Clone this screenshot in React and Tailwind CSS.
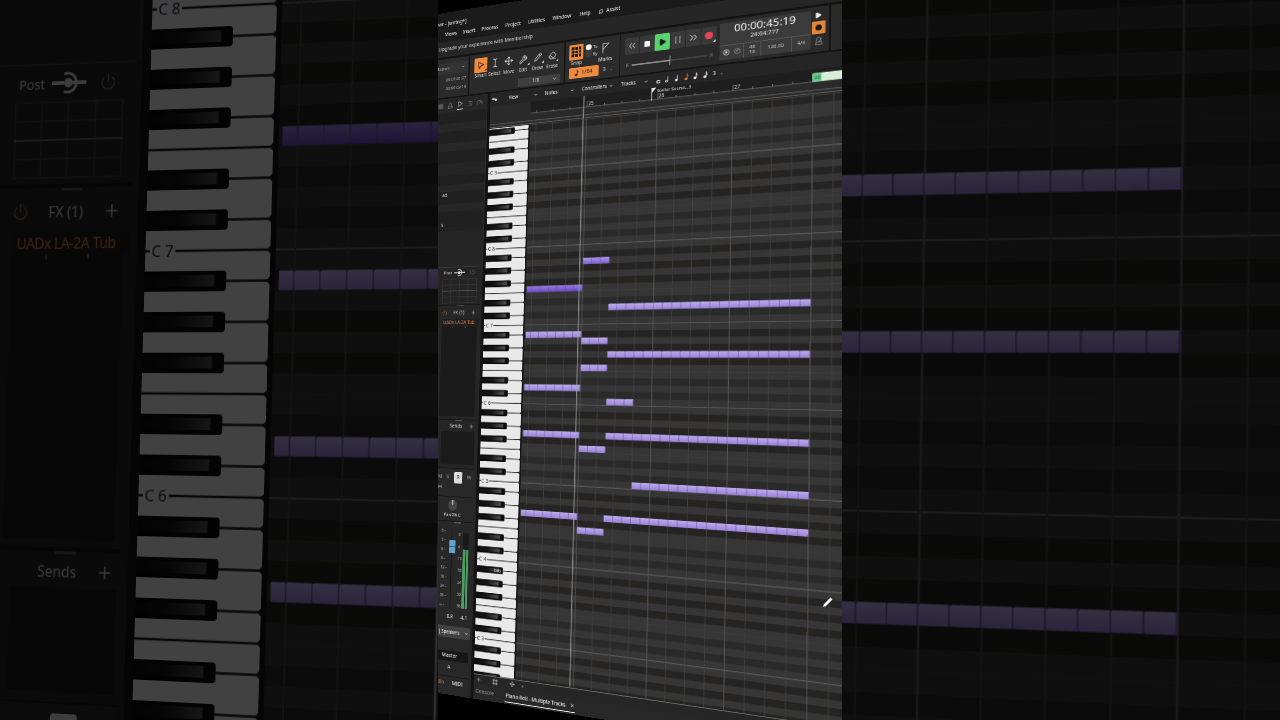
import React from "react";
import {
  ChevronDown,
  ChevronsLeft,
  ChevronsRight,
  Eraser,
  Grid3x3,
  List,
  Move,
  Pencil,
  Play,
  Plus,
  Power,
  Search,
  Wrench,
  X,
  TextCursor,
  Gauge,
} from "lucide-react";

const ROW = 21;
const CELL = 28.625;
const BEAT = 57.25;
const BLACK_ROWS = [1, 3, 5, 8, 10];
const WHITE_EDGES = [1.5, 3.5, 5.5, 7, 8.5, 10.5, 12];
// y of the C 9 line inside the roll
const C9 = 150;
const ROLL_HEIGHT = 1774;
const GRID_WIDTH = 1064;
// x of bar 25, measured from the right side of the keys
const BAR_25 = 193;

const MENU = [
  { label: "Views", width: "w-[68px]" },
  { label: "Insert", width: "w-[68px]" },
  { label: "Process", width: "w-[88px]" },
  { label: "Project", width: "w-[80px]" },
  { label: "Utilities", width: "w-[86px]" },
  { label: "Window", width: "w-[90px]" },
  { label: "Help", width: "w-[68px]" },
];

const EDITOR_MENU = [
  { label: "View", width: "w-[128px]" },
  { label: "Notes", width: "w-[126px]" },
  { label: "Controllers", width: "w-[130px]" },
  { label: "Tracks", width: "w-[112px]" },
];

// row is counted down from C 9, from and to are eighths counted from bar 25
const NOTES = [
  { row: 18, from: -6.6, to: 0, tone: "deep" },
  { row: 25, from: -6.6, to: 0 },
  { row: 33, from: -6.6, to: 0 },
  { row: 40, from: -6.6, to: 0 },
  { row: 52, from: -6.6, to: 0 },
  { row: 14, from: 0, to: 3, tone: "mid" },
  { row: 26, from: 0, to: 3 },
  { row: 30, from: 0, to: 3 },
  { row: 42, from: 0, to: 3 },
  { row: 54, from: 0, to: 3 },
  { row: 35, from: 3, to: 6 },
  { row: 21, from: 3, to: 24 },
  { row: 28, from: 3, to: 24 },
  { row: 40, from: 3, to: 24 },
  { row: 47, from: 6, to: 24 },
  { row: 52, from: 3, to: 24 },
];

function splitNote(note) {
  const cells = [];
  let start = note.from;
  while (start < note.to) {
    const stop = Math.floor(start) + 1;
    cells.push([BAR_25 + start * CELL, BAR_25 + stop * CELL]);
    start = stop;
  }
  return cells;
}

function beatLines() {
  const beats = [];
  for (let i = -3; BAR_25 + i * BEAT < GRID_WIDTH; i++) {
    beats.push({ x: BAR_25 + i * BEAT, bar: i % 4 === 0 });
  }
  return beats;
}

function TopBars() {
  return (
    <>
      <div className="flex h-14 items-end bg-[#1b1b1b] pb-1 pl-5 text-[17px] text-[#f0f0f0]">
        Sonar - [smtng*]
      </div>
      <div className="flex h-[46px] items-center bg-[#1b1b1b] pl-[61px] text-[17px] text-[#f4f4f4]">
        {MENU.map((item) => (
          <span key={item.label} className={`${item.width} text-center`}>
            {item.label}
          </span>
        ))}
        <Search size={17} className="ml-3 mr-2 -scale-x-100" />
        <span>Assist</span>
      </div>
      <div className="flex h-[54px] items-center bg-[#262626] pl-[50px] text-[17px] text-[#d6d6d6]">
        Upgrade your experience with Membership
      </div>
    </>
  );
}

function Tool({ label, active, corner, children }) {
  return (
    <div className="flex w-[51px] flex-col items-center">
      <div
        className={`relative flex h-[50px] w-[48px] items-center justify-center rounded-[3px] ${
          active ? "bg-[#f28a3c] text-[#1c1c1c]" : "text-[#dcdcdc]"
        }`}
      >
        {children}
        {corner && (
          <span className="absolute bottom-1 right-0.5 h-0 w-0 border-b-[8px] border-l-[8px] border-b-current border-l-transparent" />
        )}
      </div>
      <span className="text-[16px] leading-[22px]">{label}</span>
    </div>
  );
}

function ToolsPanel() {
  return (
    <div className="flex w-[338px] bg-[#2b2b2b] pl-4 pt-3 text-[#dcdcdc]">
      <div>
        <div className="flex">
          <Tool label="Smart" active corner>
            <svg width="28" height="30" viewBox="0 0 28 30" fill="none" stroke="currentColor" strokeWidth="2.5">
              <path d="M5 4 L24 14 L14 18 L8 26 Z" />
            </svg>
          </Tool>
          <Tool label="Select">
            <TextCursor size={32} strokeWidth={1.8} />
          </Tool>
          <Tool label="Move">
            <Move size={31} strokeWidth={2} />
          </Tool>
          <Tool label="Edit" corner>
            <Wrench size={30} strokeWidth={1.8} />
          </Tool>
          <Tool label="Draw" corner>
            <Pencil size={28} strokeWidth={1.8} />
          </Tool>
          <Tool label="Erase" corner>
            <Eraser size={29} strokeWidth={1.8} />
          </Tool>
        </div>
        <div className="ml-[162px] mt-4 flex h-[27px] w-[146px] items-center bg-[#404040] pl-[50px] pr-2 text-[17px]">
          <span className="flex-1">1/8</span>
          <ChevronDown size={18} />
        </div>
      </div>
    </div>
  );
}

function SnapPanel() {
  return (
    <div className="flex w-[180px] flex-col bg-[#2b2b2b] pl-3 pt-3 text-[#dcdcdc]">
      <div className="flex">
        <Tool label="Snap" active>
          <div className="grid grid-cols-3 gap-[2.5px]">
            {[...Array(9)].map((_, i) => (
              <span key={i} className="h-[9.5px] w-[9.5px] bg-[#1c1c1c]" />
            ))}
          </div>
        </Tool>
        <div className="flex pl-1.5 pt-1.5">
          <div className="h-[42px] w-[18px] rounded-full bg-[#3c3c3c]">
            <div className="h-[18px] w-[18px] rounded-full bg-white" />
          </div>
          <div className="flex flex-col pl-1.5 text-[13px] leading-[22px]">
            <span>To</span>
            <span>By</span>
          </div>
        </div>
        <Tool label="Marks">
          <svg width="28" height="36" viewBox="0 0 28 36" fill="none" stroke="currentColor" strokeWidth="2.2">
            <path d="M5 35 V4 H25 L5 23" />
          </svg>
        </Tool>
      </div>
      <div className="mt-1 flex items-center">
        <div className="flex h-[34px] w-[102px] items-center justify-center gap-2 rounded-sm bg-[#f28a3c] text-[18px] text-[#222]">
          <NoteGlyph kind="eighth" />
          <span>1/64</span>
        </div>
        <span className="pl-3 text-[17px]">3</span>
        <span className="pl-4 text-[17px]">.</span>
      </div>
    </div>
  );
}

function NoteGlyph({ kind }) {
  if (kind === "whole") {
    return (
      <svg width="14" height="24" viewBox="0 0 14 24" fill="none" stroke="currentColor" strokeWidth="2.5">
        <ellipse cx="7" cy="18" rx="5.5" ry="4" />
      </svg>
    );
  }
  return (
    <svg width="14" height="24" viewBox="0 0 14 24" fill="none" stroke="currentColor" strokeWidth="2">
      <ellipse cx="4.5" cy="19" rx="3.5" ry="3" fill={kind === "half" ? "none" : "currentColor"} />
      <path d="M8 19 V4" />
      {(kind === "eighth" || kind === "sixteenth") && <path d="M8 4 Q9 8 13 11" />}
      {kind === "sixteenth" && <path d="M8 9 Q9 12 13 15" />}
    </svg>
  );
}

function TransportButton({ className = "", children }) {
  return (
    <div className={`flex h-[52px] w-[46px] items-center justify-center rounded-sm ${className || "bg-[#393939]"}`}>
      {children}
    </div>
  );
}

function TransportPanel() {
  return (
    <div className="flex w-[622px] bg-[#292929] pl-3.5 text-[#dcdcdc]">
      <div className="flex w-[296px] flex-col pt-4">
        <div className="flex gap-[2px]">
          <TransportButton>
            <ChevronsLeft size={36} strokeWidth={1.5} />
          </TransportButton>
          <TransportButton>
            <span className="h-[19px] w-[19px] bg-white" />
          </TransportButton>
          <TransportButton className="bg-[#58d26d] text-[#111]">
            <Play size={24} fill="currentColor" />
          </TransportButton>
          <TransportButton>
            <div className="h-[24px] w-[15px] border-x-[2.5px] border-[#bdbdbd]" />
          </TransportButton>
          <TransportButton>
            <ChevronsRight size={36} strokeWidth={1.5} />
          </TransportButton>
          <TransportButton className="relative bg-[#393939]">
            <span className="h-[24px] w-[24px] rounded-full bg-[#e24558]" />
            <span className="absolute bottom-1 right-0.5 h-0 w-0 border-b-[9px] border-l-[9px] border-b-white border-l-transparent" />
          </TransportButton>
        </div>
        <div className="mt-5 flex items-center gap-2 pl-1 pr-5">
          <span className="text-[16px] leading-none text-[#8a8a8a]">K</span>
          <div className="flex flex-1 items-center">
            <div className="h-[4px] w-[120px] bg-[#8a8a8a]" />
            <div className="h-[30px] w-[4px] bg-[#b0b0b0]" />
            <div className="h-[4px] flex-1 bg-[#444]" />
          </div>
          <span className="-scale-x-100 text-[16px] leading-none text-[#8a8a8a]">K</span>
        </div>
      </div>
      <div className="mt-2.5 flex h-[112px] w-[261px] flex-col rounded bg-[#3b3b3b] text-[#ececec]">
        <div className="flex h-[67px] flex-col items-center">
          <span className="text-[33px] leading-[36px]">00:00:45:19</span>
          <span className="text-[18px] leading-[22px]">24:04:777</span>
        </div>
        <div className="flex flex-1 border-t-2 border-[#555] text-[15px] text-[#c8c8c8]">
          <div className="flex w-[70px] items-center justify-center gap-3">
            <svg width="20" height="20" viewBox="0 0 20 20">
              <circle cx="10" cy="10" r="8" fill="none" stroke="#ccc" strokeWidth="2" />
              <circle cx="10" cy="10" r="3.5" fill="#ddd" />
            </svg>
            <svg width="20" height="20" viewBox="0 0 20 20" fill="none" stroke="#888" strokeWidth="2">
              <circle cx="10" cy="10" r="8" />
              <path d="M6 8 H14 M7 13 L15 4" />
            </svg>
          </div>
          <div className="flex w-[48px] flex-col items-center justify-center border-l-2 border-[#555] leading-[16px]">
            <span>48</span>
            <span>16</span>
          </div>
          <div className="flex w-[88px] items-center justify-center border-l-2 border-[#555]">126.00</div>
          <div className="flex flex-1 items-center justify-center border-l-2 border-[#555]">4/4</div>
        </div>
      </div>
      <div className="flex flex-1 flex-col items-center gap-[7px] pr-2 pt-[15px]">
        <Play size={20} fill="#eee" stroke="#eee" />
        <div className="flex h-[38px] w-[38px] items-center justify-center rounded-[3px] bg-[#e2863e]">
          <span className="h-[18px] w-[18px] rounded-full bg-[#1c1414]" />
        </div>
        <svg width="24" height="28" viewBox="0 0 24 28" fill="none" stroke="#8b8b8b" strokeWidth="2">
          <path d="M8 3 H15 L21 24 H3 Z M6 17 H18 M11 17 L20 5" />
        </svg>
      </div>
    </div>
  );
}

function Toolbar() {
  return (
    <div className="flex h-[144px] gap-1 bg-[#141414] py-1.5">
      <div className="flex w-[166px] flex-col bg-[#2b2b2b] pl-[48px] pt-4 text-[15px] text-[#b4b4b4]">
        <div className="flex h-[36px] items-center bg-[#333] pr-3">
          <span className="flex-1">Export</span>
          <ChevronDown size={16} />
        </div>
        <span className="mt-3 self-end pr-2 text-[14px]">00:01:21:27</span>
        <span className="mt-2 self-end pr-2 text-[14px]">00:00:02:19</span>
      </div>
      <ToolsPanel />
      <SnapPanel />
      <TransportPanel />
      <div className="flex-1 bg-[#2b2b2b] pl-[34px] pt-[90px] text-[15px] text-[#ccc]">Performance</div>
    </div>
  );
}

function StripPower({ color }) {
  return <Power size={19} strokeWidth={1.8} color={color} />;
}

function Handle() {
  return <div className="mx-auto h-[3px] w-6 bg-[#555]" />;
}

function MeterScale({ values }) {
  return (
    <div className="flex h-full flex-col justify-between whitespace-nowrap text-[12px] leading-none text-[#c0c0c0]">
      {values.map((value, i) => (
        <span key={i}>{value}</span>
      ))}
    </div>
  );
}

function Inspector() {
  return (
    <div className="flex w-[240px] shrink-0 flex-col bg-[#262626] text-[#d0d0d0]">
      <div className="flex h-[50px] items-center gap-[16px] pl-[54px] text-[#8a8a8a]">
        <Grid3x3 size={20} />
        <svg width="22" height="22" viewBox="0 0 24 24" fill="none" stroke="currentColor" strokeWidth="2">
          <path d="M8 3 H16 L21 21 H3 Z M6 15 H18" />
        </svg>
        <div className="flex h-[34px] items-center border-b-[3px] border-white text-[#ccc]">
          <Play size={21} />
        </div>
        <List size={20} />
        <Gauge size={22} />
      </div>
      <div className="flex h-[524px] flex-col border-r-4 border-[#303030] bg-[#202020] text-[15px]">
        <div className="mt-[38px] h-[26px] bg-[#272727]" />
        <div className="mt-[42px] h-[26px] bg-[#272727]" />
        <div className="mt-[42px] h-[40px] bg-[#252525]" />
        <div className="mt-[34px] h-[22px] bg-[#272727]" />
        <span className="pl-[80px] text-[17px]">ad</span>
        <div className="mt-[16px] h-[26px] bg-[#272727]" />
        <span className="mt-[34px] pl-[80px] text-[17px]">s</span>
        <div className="mt-2 flex-1 bg-[#262626]" />
      </div>
      <div className="mr-2 flex h-[128px] flex-col border-t-2 border-[#3a3a3a] bg-[#242424] pl-[97px]">
        <div className="flex h-[38px] items-center gap-2 text-[15px]">
          <span>Post</span>
          <svg width="40" height="26" viewBox="0 0 40 26" fill="none" stroke="#d8d8d8" strokeWidth="4">
            <path d="M0 13 H14 M20 13 H40" />
            <path d="M14 4 A10 10 0 1 1 14 22" strokeWidth="3" />
            <circle cx="19" cy="13" r="5" fill="#d8d8d8" stroke="none" />
          </svg>
          <span className="flex-1 pl-2">
            <StripPower color="#777" />
          </span>
        </div>
        <svg width="127" height="82" viewBox="0 0 127 82" fill="none" stroke="#393939" strokeWidth="2" className="-ml-1">
          <rect x="1" y="1" width="125" height="80" />
          <path d="M32 0 V82 M63 0 V82 M95 0 V82 M0 21 H127 M0 61 H127" />
          <path d="M0 41 H127" stroke="#606060" />
        </svg>
      </div>
      <div className="mr-2 flex h-[380px] flex-col border-t-4 border-[#171717] bg-[#262626] pl-[94px]">
        <Handle />
        <div className="flex h-[43px] items-center justify-between pr-3 text-[16px]">
          <StripPower color="#a9673b" />
          <span>FX (1)</span>
          <Plus size={20} />
        </div>
        <div className="h-[24px] whitespace-nowrap bg-[#1f1f1f] pl-1.5 text-[16px] leading-[24px] tracking-tight text-[#dd7b42]">
          UADx LA-2A Tub
        </div>
        <div className="mr-2 flex h-[298px] justify-around bg-[#1b1b1b] px-4">
          <span className="h-[5px] w-[2px] bg-[#666]" />
          <span className="h-[5px] w-[2px] bg-[#666]" />
        </div>
      </div>
      <div className="mr-2 flex h-[160px] flex-col border-t-4 border-[#171717] bg-[#262626] pl-[104px]">
        <Handle />
        <div className="flex h-[35px] items-center justify-between pl-8 pr-2 text-[16px]">
          <span>Sends</span>
          <Plus size={20} />
        </div>
        <div className="mr-1 h-[108px] bg-[#1b1b1b]" />
      </div>
      <div className="mr-2 flex h-[94px] flex-col border-t-2 border-[#171717] bg-[#282828] pl-[98px] pt-2.5 text-[17px] text-[#a0a0a0]">
        <div className="flex items-center justify-between pr-3">
          <span>M</span>
          <span>S</span>
          <span className="flex h-[37px] w-[31px] items-center justify-center rounded-sm bg-[#dcdcdc] text-[#222]">R</span>
          <span>W</span>
        </div>
        <span className="leading-6">⋈</span>
      </div>
      <div className="mr-2 flex h-[80px] flex-col items-center border-t-2 border-[#171717] bg-[#282828] pl-[98px] pr-5 pt-1">
        <svg width="36" height="42" viewBox="0 0 36 42">
          <ellipse cx="18" cy="22" rx="16" ry="18" fill="#464646" />
          <path d="M18 5 V20" stroke="#ddd" strokeWidth="4" />
        </svg>
        <span className="whitespace-nowrap text-[14px] leading-5 text-[#e6e6e6]">Pan 0% C</span>
      </div>
      <div className="mr-2 flex h-[340px] flex-col border-t-4 border-[#171717] bg-[#282828] pl-[118px]">
        <Handle />
        <div className="flex h-[274px] gap-1.5 pt-5">
          <MeterScale values={["6 –", "3 –", "0 –", "6 –", "12 –", "18 –", "24 –", "36 –", "∞ –"]} />
          <div className="relative h-full w-[20px] shrink-0">
            <div className="mx-auto h-full w-[3px] bg-[#111]" />
            <div className="absolute left-0 top-[36px] flex h-[42px] w-[22px] items-center rounded-[3px] bg-[#62a3cb]">
              <div className="h-[3px] w-full bg-[#28546d]" />
            </div>
          </div>
          <div className="flex h-full gap-1 pl-2 pt-3">
            <MeterScale values={["3", "6", "12", "18", "24", "30", "36"]} />
            <div className="flex h-full items-end gap-[3px] bg-[#1a1a1a]">
              <div className="h-[190px] w-[8px] bg-[#4d9c64]" />
              <div className="h-[190px] w-[8px] bg-[#4d9c64]" />
            </div>
          </div>
        </div>
        <div className="flex gap-6 pl-7 pt-4 text-[16px] text-[#f0f0f0]">
          <span>0.8</span>
          <span>-4.1</span>
        </div>
      </div>
      <div className="mr-2 flex flex-1 flex-col bg-[#282828] pl-[108px]">
        <div className="flex h-[36px] items-center justify-between rounded bg-[#424242] pl-2 pr-1 text-[16px] text-[#eee]">
          <span className="tracking-tight">| Speakers</span>
          <ChevronDown size={18} />
        </div>
        <div className="mr-1 mt-[42px] flex h-[34px] items-center bg-[#171717] pl-6 text-[17px] text-[#f4f4f4]">Master</div>
        <span className="pl-[46px] pt-1.5 text-[17px] leading-[24px]">A</span>
        <div className="mt-4 flex gap-7 border-t-4 border-[#171717] pt-2 text-[17px]">
          <span className="text-[#c8763c]">udio</span>
          <span className="text-[#f4f4f4]">MIDI</span>
        </div>
      </div>
    </div>
  );
}

function EditorHeader() {
  return (
    <div className="flex h-[46px] items-center bg-[#252525] text-[16px] text-[#f0f0f0]">
      <svg width="20" height="14" viewBox="0 0 20 14" className="ml-1.5">
        <path d="M0 5 L6 1 V4 H14 V8 H6 V9 Z M12 6 H20 V12 H12 Z" fill="#e8e8e8" />
      </svg>
      <div className="flex pl-[40px]">
        {EDITOR_MENU.map((item) => (
          <div key={item.label} className={`${item.width} flex items-center justify-between pr-6`}>
            <span>{item.label}</span>
            <ChevronDown size={15} />
          </div>
        ))}
      </div>
      <div className="flex items-center gap-[15px]">
        <NoteGlyph kind="whole" />
        <NoteGlyph kind="half" />
        <NoteGlyph kind="quarter" />
        <span className="text-[#e07a35]">
          <NoteGlyph kind="eighth" />
        </span>
        <NoteGlyph kind="eighth" />
        <NoteGlyph kind="sixteenth" />
        <span>3</span>
        <span>.</span>
      </div>
    </div>
  );
}

function Ruler() {
  return (
    <div className="flex h-[74px] bg-[#2a2a2a]">
      <svg width="1210" height="74" viewBox="0 0 1210 74">
        <rect x="146" y="0" width="1064" height="37" fill="#1e1e1e" />
        <path d="M146 37 H1210" stroke="#777" strokeWidth="2" />
        <path d="M0 62 H1210 M0 71 H1210" stroke="#606060" strokeWidth="2.5" />
        {beatLines().map((beat) => (
          <path
            key={beat.x}
            d={`M${146 + beat.x} 37 v${beat.bar ? -18 : -7}`}
            stroke="#8c8c8c"
            strokeWidth="2"
          />
        ))}
        <g fill="#d6d6d6" fontSize="16">
          <text x="343" y="33">25</text>
          <text x="570" y="33">26</text>
          <text x="800" y="33">27</text>
        </g>
        <path d="M549 40 V0 H562 L550 14" fill="#e8e8e8" stroke="#e8e8e8" strokeWidth="2" />
        <text x="565" y="14" fill="#dadada" fontSize="14">
          Stellar Sound...3
        </text>
        <rect x="1024" y="12" width="186" height="25" fill="#d5efd9" />
        <rect x="1024" y="12" width="24" height="25" fill="#69c98a" />
        <text x="1028" y="31" fill="#1d5c37" fontSize="15">28</text>
        <path d="M328 0 V74" stroke="#c0c0c0" strokeWidth="2.6" />
      </svg>
    </div>
  );
}

function Piano() {
  const whites = [];
  const blacks = [];
  const labels = [];
  for (let octave = -1; octave < 7; octave++) {
    const top = C9 + octave * 12 * ROW;
    WHITE_EDGES.forEach((edge) => whites.push(top + edge * ROW));
    BLACK_ROWS.forEach((row) => blacks.push(top + row * ROW));
    if (octave < 6) labels.push({ y: top + 12 * ROW, name: `C ${8 - octave}` });
  }
  return (
    <svg width="146" height={ROLL_HEIGHT} viewBox={`0 0 146 ${ROLL_HEIGHT}`} className="shrink-0">
      <defs>
        <linearGradient id="ebony" x1="0" y1="0" x2="1" y2="0">
          <stop offset="0" stopColor="#0d0d0d" />
          <stop offset="0.45" stopColor="#161616" />
          <stop offset="0.9" stopColor="#505050" />
          <stop offset="0.92" stopColor="#0e0e0e" />
        </linearGradient>
      </defs>
      <rect width="146" height={ROLL_HEIGHT} fill="#151515" />
      <rect width="140" height={ROLL_HEIGHT} fill="#e9e9e9" />
      {whites.map((y) => (
        <g key={y}>
          <path d={`M0 ${y} H140`} stroke="#1d1d1d" strokeWidth="2.5" />
          <path d={`M136 ${y} L140 ${y - 4} V${y + 4} Z`} fill="#1d1d1d" />
        </g>
      ))}
      {blacks.map((y) => (
        <g key={y}>
          <rect x="-6" y={y} width="98" height={ROW} rx="4" fill="#0b0b0b" />
          <rect x="-6" y={y + 4} width="93" height={ROW - 9} rx="3" fill="url(#ebony)" />
        </g>
      ))}
      {labels.map((label) => (
        <g key={label.name}>
          <rect x="5" y={label.y - 9} width="29" height="18" fill="#e9e9e9" />
          <text x="7" y={label.y + 6} fontSize="17" fill="#1f1f38" textLength="25">
            {label.name}
          </text>
        </g>
      ))}
      <text x="60" y={C9 + 61.5 * ROW + 5} fontSize="13" fill="#e0e0e0">
        D#3
      </text>
    </svg>
  );
}

function NoteGrid() {
  const dark = [];
  const lines = [];
  for (let octave = -1; octave < 7; octave++) {
    const top = C9 + octave * 12 * ROW;
    BLACK_ROWS.forEach((row) => dark.push({ y: top + row * ROW, warm: row < 7 }));
    lines.push(top);
  }
  return (
    <svg width={GRID_WIDTH} height={ROLL_HEIGHT} viewBox={`0 0 ${GRID_WIDTH} ${ROLL_HEIGHT}`} className="shrink-0">
      <defs>
        <linearGradient id="note" x1="0" y1="0" x2="0" y2="1">
          <stop offset="0" stopColor="#bdabed" />
          <stop offset="1" stopColor="#9a82d8" />
        </linearGradient>
        <linearGradient id="note-mid" x1="0" y1="0" x2="0" y2="1">
          <stop offset="0" stopColor="#ab92ea" />
          <stop offset="1" stopColor="#8062cb" />
        </linearGradient>
        <linearGradient id="note-deep" x1="0" y1="0" x2="0" y2="1">
          <stop offset="0" stopColor="#987dde" />
          <stop offset="1" stopColor="#6d48c2" />
        </linearGradient>
      </defs>
      <rect width={GRID_WIDTH} height={ROLL_HEIGHT} fill="#363636" />
      {dark.map((row) => (
        <rect key={row.y} y={row.y} width={GRID_WIDTH} height={ROW} fill={row.warm ? "#262422" : "#2a2a2a"} />
      ))}
      {lines.map((y) => (
        <g key={y}>
          <path d={`M0 ${y + 7 * ROW} H${GRID_WIDTH}`} stroke="#3f3f3f" strokeWidth="1.5" />
          <path d={`M0 ${y} H${GRID_WIDTH}`} stroke="#646464" strokeWidth="2.2" />
        </g>
      ))}
      {beatLines().map((beat) => (
        <path
          key={beat.x}
          d={`M${beat.x} 0 V${ROLL_HEIGHT}`}
          stroke={beat.bar ? "#5a5a5a" : "#464646"}
          strokeWidth={beat.bar ? 2.4 : 1.8}
        />
      ))}
      {NOTES.map((note) =>
        splitNote(note).map(([start, stop]) => (
          <g key={`${note.row}-${start}`}>
            <rect
              x={start}
              y={C9 + note.row * ROW + 0.5}
              width={stop - start}
              height={ROW - 1}
              rx="1.5"
              fill={note.tone === "deep" ? "url(#note-deep)" : note.tone === "mid" ? "url(#note-mid)" : "url(#note)"}
            />
            <path d={`M${stop - 1} ${C9 + note.row * ROW + 1} v${ROW - 2}`} stroke="#6c58a8" strokeWidth="1.4" />
          </g>
        ))
      )}
      <path d={`M182 0 V${ROLL_HEIGHT}`} stroke="#a8a8a8" strokeWidth="2.6" />
    </svg>
  );
}

function Editor() {
  return (
    <div className="flex w-[1210px] shrink-0 flex-col">
      <EditorHeader />
      <Ruler />
      <div className="flex h-[1774px]">
        <Piano />
        <NoteGrid />
      </div>
      <div className="flex h-[34px] items-center gap-[38px] border-t-[3px] border-[#6a6a6a] bg-[#262626] pl-2 text-[#c2c2c2]">
        <Plus size={20} />
        <svg width="20" height="20" viewBox="0 0 20 20" fill="none" stroke="currentColor" strokeWidth="2">
          <path d="M5 1 V19 M15 1 V19 M1 5 H19 M1 15 H19" />
        </svg>
        <Move size={18} />
        <span className="-ml-4 text-[14px] text-[#777]">◂</span>
      </div>
      <div className="flex flex-1 items-center bg-[#282828] text-[17px]">
        <span className="w-[109px] pl-2 text-[#999]">Console</span>
        <div className="flex h-[38px] w-[235px] items-center justify-between whitespace-nowrap border-b-[4px] border-white pl-1 text-[#f4f4f4]">
          <span className="tracking-tight">Piano Roll - Multiple Tracks</span>
          <X size={17} />
        </div>
      </div>
    </div>
  );
}

// the window is laid out flat, then tilted as one plane
function Scene({ small }) {
  const tilt = small
    ? "[transform:matrix3d(0.53134775,-0.11381975,0,-0.00031952,-0.0421675,0.7401355,0,-0.00004243225,0,0,1,0,444.854,16.422,0,1.041883)]"
    : "[transform:matrix3d(0.2125391,-0.0455279,0,-0.000127808,-0.016867,0.2960542,0,-0.0000169729,0,0,1,0,444.854,16.422,0,1.041883)]";
  return (
    <div className="relative h-[720px] w-[1280px] overflow-hidden bg-black">
      <div className={`w-fit origin-top-left ${tilt}`}>
        <div className={`flex h-[2274px] w-[1460px] flex-col bg-[#171717] ${small ? "[zoom:0.4]" : ""}`}>
          <TopBars />
          <Toolbar />
          <div className="flex flex-1">
            <Inspector />
            <div className="w-[10px] shrink-0 bg-[#131313]" />
            <Editor />
          </div>
        </div>
      </div>
      <svg className="absolute left-[822px] top-[595px]" width="12" height="13" viewBox="0 0 12 13">
        <path d="M2.5 10.5 L9.5 3.5" stroke="#fff" strokeWidth="2.6" />
        <path d="M1 12 L2 9 L4 11 Z" fill="#fff" />
      </svg>
    </div>
  );
}

export default function App() {
  return (
    <div className="relative h-[720px] w-[1280px] overflow-hidden bg-black font-['Noto_Sans',sans-serif]">
      <div className="absolute inset-0 scale-[3.168]">
        <Scene />
      </div>
      <div className="absolute inset-0 bg-black/72" />
      <div className="absolute inset-0 [clip-path:inset(0_438px)]">
        <Scene small />
      </div>
    </div>
  );
}
